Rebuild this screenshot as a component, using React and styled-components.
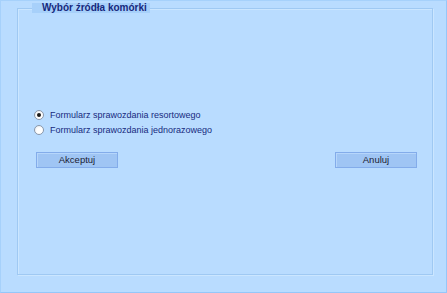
import React, { useState } from 'react';
import styled, { createGlobalStyle } from 'styled-components';

const GlobalStyle = createGlobalStyle`
    html, body {
        margin: 0;
        padding: 0;
        background: #b9dcff;
    }
    * {
        box-sizing: border-box;
    }
`;

const Window = styled.div`
    width: 447px;
    height: 293px;
    background: #b9dcff;
    border: 1px solid #95c7f9;
    border-left-color: #a6d1fb;
    border-top-color: #a6d1fb;
    padding: 2px 13px 0 16px;
    font-family: 'Liberation Sans', Arial, sans-serif;
`;

const GroupBox = styled.fieldset`
    margin: 0;
    height: 272px;
    width: 416px;
    border: 1px solid #9fc9f3;
    box-shadow: inset 1px 1px 0 #cbe6ff, 1px 1px 0 #cbe6ff;
    padding: 0 15px 0 14px;
    display: flex;
    flex-direction: column;
`;

const Title = styled.legend`
    padding: 0 0 0 10px;
    width: 118px;
    height: 10px;
    line-height: 10px;
    white-space: nowrap;
    background: #a7d0fa;
    color: #16287c;
    font-size: 10px;
    font-weight: bold;
`;

const Options = styled.div`
    margin-top: 96px;
    display: flex;
    flex-direction: column;
    gap: 3px;
    padding-left: 2px;
`;

const Option = styled.label`
    display: flex;
    align-items: center;
    gap: 6px;
    height: 12px;
    color: #172a80;
    font-size: 9px;
    cursor: default;
`;

const Radio = styled.span`
    width: 10px;
    height: 10px;
    border-radius: 50%;
    border: 1px solid #8b98aa;
    background: radial-gradient(circle at 60% 60%, #ffffff 40%, #dfe6ee 100%);
    display: flex;
    align-items: center;
    justify-content: center;

    &::after {
        content: '';
        width: 4px;
        height: 4px;
        border-radius: 50%;
        background: ${props => props.checked ? '#1b1b1b' : 'transparent'};
    }
`;

const Buttons = styled.div`
    margin-top: 16px;
    display: flex;
    justify-content: space-between;
    padding-left: 4px;
`;

const Button = styled.button`
    width: 82px;
    height: 16px;
    padding: 0;
    background: #9fc5f4;
    border: 1px solid #83acea;
    box-shadow: inset 1px 1px 0 #b6d6fb;
    color: #1c2233;
    font-family: 'Liberation Sans', Arial, sans-serif;
    font-size: 9.5px;
    line-height: 14px;
    cursor: default;
`;

const options = [
    'Formularz sprawozdania resortowego',
    'Formularz sprawozdania jednorazowego',
];

export default function App() {
    const [selected, setSelected] = useState(0);

    return (
        <>
            <GlobalStyle />
            <Window>
                <GroupBox>
                    <Title>Wybór źródła komórki</Title>
                    <Options>
                        {options.map((label, i) => (
                            <Option key={label} onClick={() => setSelected(i)}>
                                <Radio checked={selected === i} />
                                {label}
                            </Option>
                        ))}
                    </Options>
                    <Buttons>
                        <Button>Akceptuj</Button>
                        <Button>Anuluj</Button>
                    </Buttons>
                </GroupBox>
            </Window>
        </>
    );
}
